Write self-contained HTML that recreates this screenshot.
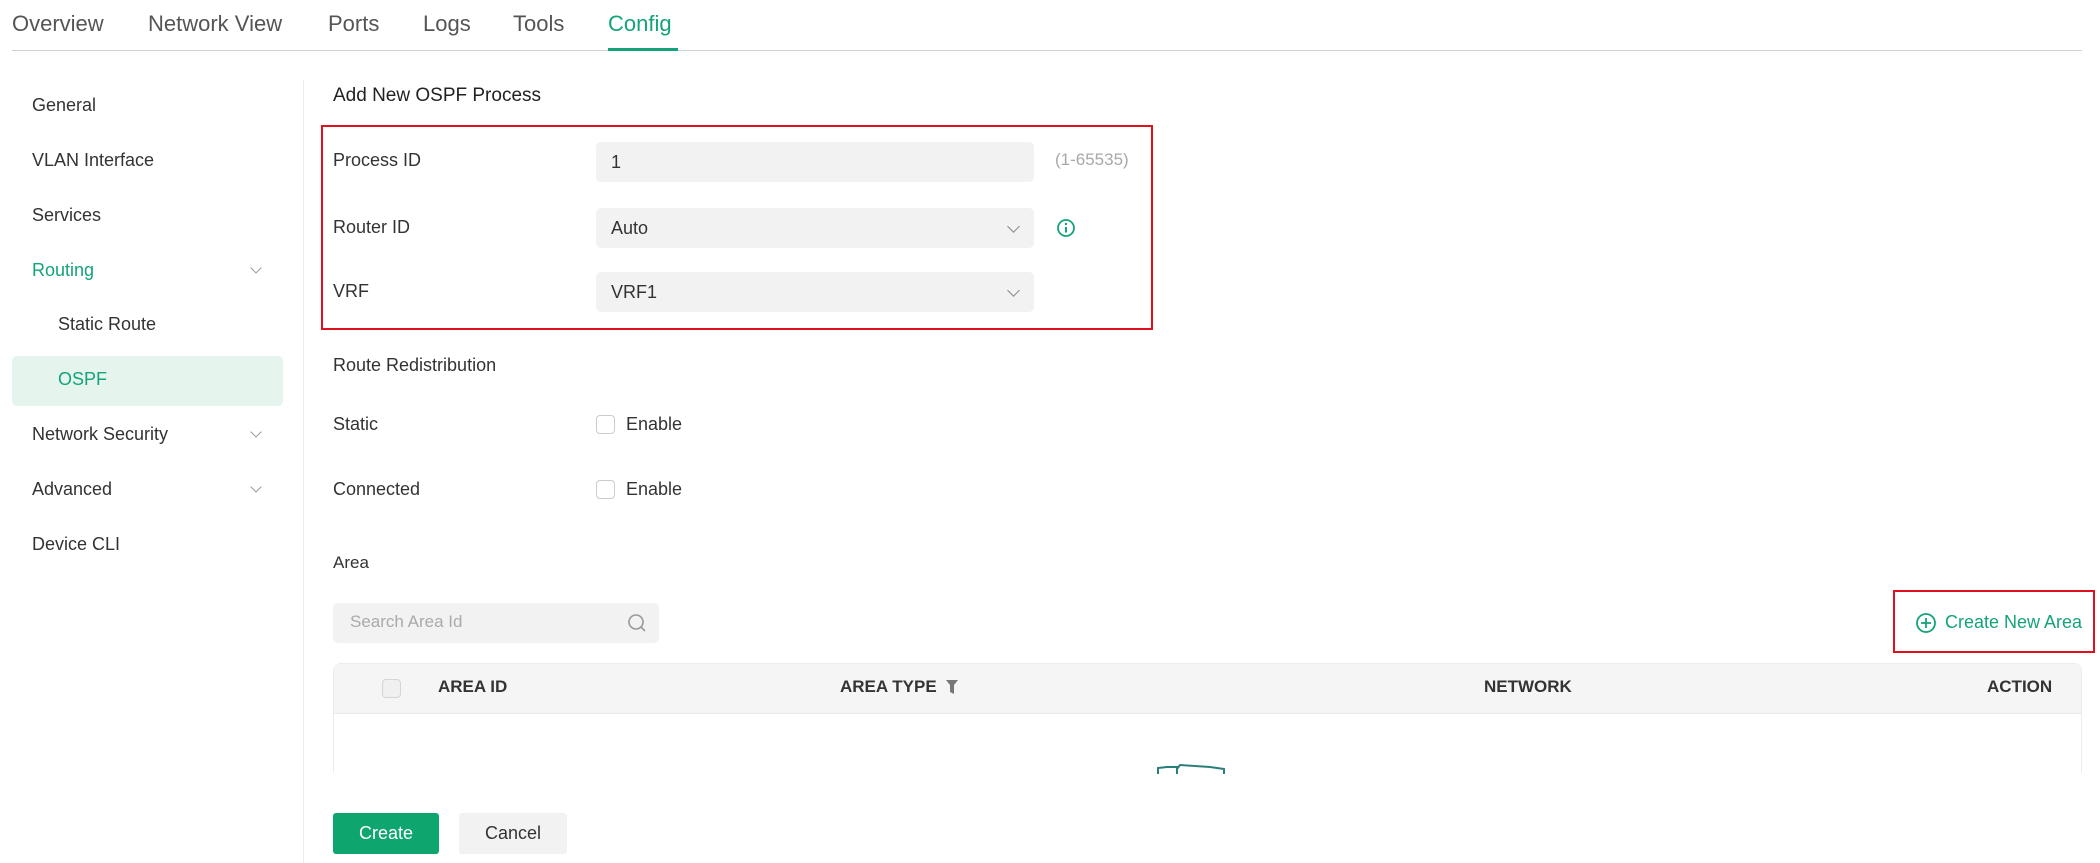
<!DOCTYPE html>
<html><head><meta charset="utf-8"><style>
*{box-sizing:border-box;margin:0;padding:0}
body{width:2100px;height:863px;overflow:hidden;background:#fff;font-family:"Liberation Sans",sans-serif;color:#333;position:relative}
.a{position:absolute;white-space:nowrap}
.tab{font-size:22px;color:#555;top:11px}
.side{font-size:18px;color:#333;left:32px}
.lbl{font-size:18px;color:#333;left:333px}
.inp{position:absolute;left:596px;width:438px;height:40px;background:#f2f2f2;border-radius:5px;font-size:18px;padding:0 0 0 15px;line-height:40px;color:#333}
.chev{position:absolute;right:16px;top:14px;width:9px;height:9px;border-right:1.5px solid #888;border-bottom:1.5px solid #888;transform:rotate(45deg)}
.sch{position:absolute;width:8px;height:8px;border-right:1.5px solid #999;border-bottom:1.5px solid #999;transform:rotate(45deg)}
.cb{position:absolute;width:19px;height:19px;border:1.5px solid #ccc;border-radius:4px;background:#fff}
.th{font-size:17px;font-weight:bold;color:#333;top:677px}
</style></head><body>
<div class="a tab" style="left:12px">Overview</div>
<div class="a tab" style="left:148px">Network View</div>
<div class="a tab" style="left:328px">Ports</div>
<div class="a tab" style="left:423px">Logs</div>
<div class="a tab" style="left:513px">Tools</div>
<div class="a tab" style="left:608px;color:#14a37a">Config</div>
<div class="a" style="left:12px;top:50px;width:2070px;height:1px;background:#d0d0d0"></div>
<div class="a" style="left:608px;top:48px;width:70px;height:3px;background:#14a37a"></div>

<div class="a" style="left:303px;top:80px;width:1px;height:783px;background:#ececec"></div>
<div class="a" style="left:12px;top:356px;width:271px;height:50px;background:#e5f5ee;border-radius:5px"></div>
<div class="a side" style="top:95px">General</div>
<div class="a side" style="top:150px">VLAN Interface</div>
<div class="a side" style="top:205px">Services</div>
<div class="a side" style="top:260px;color:#14a37a">Routing</div>
<div class="a side" style="top:314px;left:58px">Static Route</div>
<div class="a side" style="top:369px;left:58px;color:#14a37a">OSPF</div>
<div class="a side" style="top:424px">Network Security</div>
<div class="a side" style="top:479px">Advanced</div>
<div class="a side" style="top:534px">Device CLI</div>
<div class="sch" style="left:252px;top:264px"></div>
<div class="sch" style="left:252px;top:428px"></div>
<div class="sch" style="left:252px;top:483px"></div>

<div class="a" style="left:333px;top:85px;font-size:19px;font-weight:500;color:#222">Add New OSPF Process</div>
<div class="a" style="left:321px;top:125px;width:832px;height:205px;border:2px solid #e0101c"></div>
<div class="a lbl" style="top:150px">Process ID</div>
<div class="inp" style="top:142px">1</div>
<div class="a" style="left:1055px;top:150px;font-size:17px;color:#a8a8a8">(1-65535)</div>
<div class="a lbl" style="top:217px">Router ID</div>
<div class="inp" style="top:208px">Auto<div class="chev"></div></div>
<svg class="a" style="left:1056px;top:218px" width="20" height="20" viewBox="0 0 20 20"><circle cx="10" cy="10" r="8" fill="none" stroke="#14a37a" stroke-width="1.8"/><line x1="10" y1="9" x2="10" y2="14.5" stroke="#14a37a" stroke-width="2"/><circle cx="10" cy="6" r="1.2" fill="#14a37a"/></svg>
<div class="a lbl" style="top:281px">VRF</div>
<div class="inp" style="top:272px">VRF1<div class="chev"></div></div>

<div class="a lbl" style="top:355px">Route Redistribution</div>
<div class="a lbl" style="top:414px">Static</div>
<div class="cb" style="left:596px;top:415px"></div>
<div class="a" style="left:626px;top:414px;font-size:18px">Enable</div>
<div class="a lbl" style="top:479px">Connected</div>
<div class="cb" style="left:596px;top:480px"></div>
<div class="a" style="left:626px;top:479px;font-size:18px">Enable</div>

<div class="a lbl" style="top:553px;font-size:17px">Area</div>
<div class="a" style="left:333px;top:603px;width:326px;height:40px;background:#f2f2f2;border-radius:5px"></div>
<div class="a" style="left:350px;top:612px;font-size:17px;color:#aaa">Search Area Id</div>
<svg class="a" style="left:626px;top:612px" width="22" height="22" viewBox="0 0 22 22"><circle cx="10" cy="10" r="7" fill="none" stroke="#999" stroke-width="1.6"/><line x1="15" y1="15" x2="19" y2="19" stroke="#999" stroke-width="1.6"/></svg>

<div class="a" style="left:1893px;top:590px;width:202px;height:63px;border:2px solid #e0101c"></div>
<svg class="a" style="left:1915px;top:612px" width="22" height="22" viewBox="0 0 22 22"><circle cx="11" cy="11" r="9" fill="none" stroke="#14a37a" stroke-width="1.8"/><line x1="11" y1="6" x2="11" y2="16" stroke="#14a37a" stroke-width="1.8"/><line x1="6" y1="11" x2="16" y2="11" stroke="#14a37a" stroke-width="1.8"/></svg>
<div class="a" style="left:1945px;top:612px;font-size:18px;color:#14a37a">Create New Area</div>

<div class="a" style="left:333px;top:663px;width:1749px;height:200px;border:1px solid #ececec;border-bottom:none;border-radius:8px 8px 0 0"></div>
<div class="a" style="left:334px;top:664px;width:1747px;height:50px;background:#f5f5f5;border-bottom:1px solid #e8e8e8;border-radius:8px 8px 0 0"></div>
<div class="cb" style="left:382px;top:679px;background:#f0f0f0;border-color:#d5d5d5"></div>
<div class="a th" style="left:438px">AREA ID</div>
<div class="a th" style="left:840px">AREA TYPE</div>
<svg class="a" style="left:945px;top:679px" width="14" height="16" viewBox="0 0 14 16"><path d="M1 1h12l-4 5v9l-4-2V6z" fill="#777"/></svg>
<div class="a th" style="left:1484px">NETWORK</div>
<div class="a th" style="left:1987px">ACTION</div>
<div class="a" style="left:320px;top:773px;width:1780px;height:90px;background:#fff"></div>
<svg class="a" style="left:1155px;top:762px" width="90" height="14" viewBox="0 0 90 14"><path d="M3 12V6l9-1h10v7M22 7l3-4 30 2 14 2v5" fill="none" stroke="#2a7f7a" stroke-width="2"/></svg>

<div class="a" style="left:333px;top:813px;width:106px;height:41px;background:#0fa56f;border-radius:3px;color:#fff;font-size:18px;text-align:center;line-height:41px">Create</div>
<div class="a" style="left:459px;top:813px;width:108px;height:41px;background:#f2f2f2;border-radius:3px;color:#333;font-size:18px;text-align:center;line-height:41px">Cancel</div>
</body></html>
